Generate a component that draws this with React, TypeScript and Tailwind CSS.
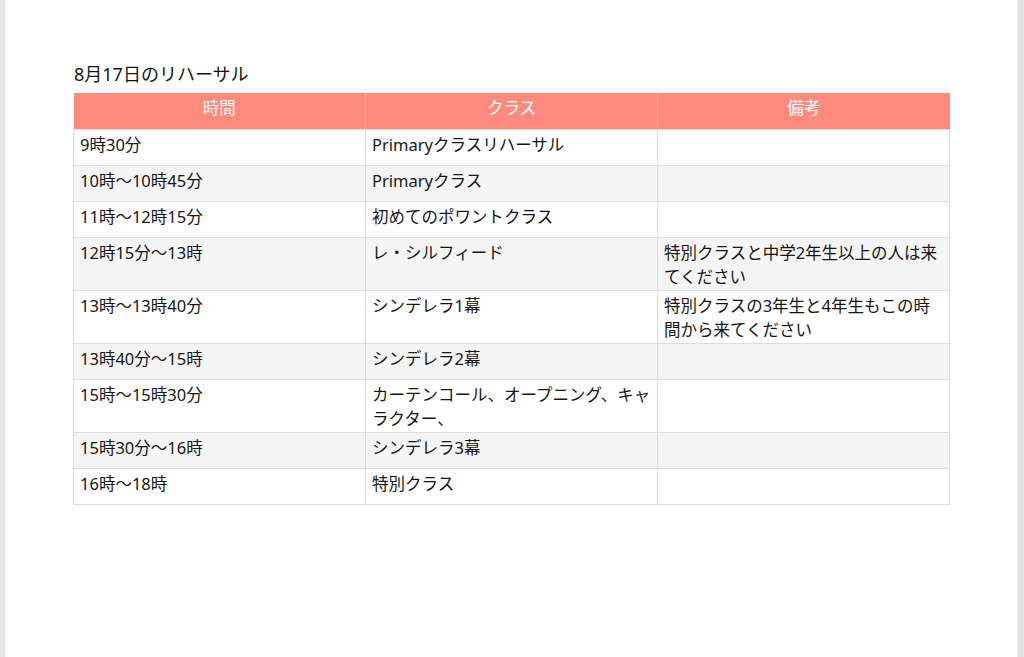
const rows: { time: string; cls: string[]; note: string[] }[] = [
  { time: "9時30分", cls: ["Primaryクラスリハーサル"], note: [] },
  { time: "10時〜10時45分", cls: ["Primaryクラス"], note: [] },
  { time: "11時〜12時15分", cls: ["初めてのポワントクラス"], note: [] },
  { time: "12時15分〜13時", cls: ["レ・シルフィード"], note: ["特別クラスと中学2年生以上の人は来", "てください"] },
  { time: "13時〜13時40分", cls: ["シンデレラ1幕"], note: ["特別クラスの3年生と4年生もこの時", "間から来てください"] },
  { time: "13時40分〜15時", cls: ["シンデレラ2幕"], note: [] },
  { time: "15時〜15時30分", cls: ["カーテンコール、オープニング、キャ", "ラクター、"], note: [] },
  { time: "15時30分〜16時", cls: ["シンデレラ3幕"], note: [] },
  { time: "16時〜18時", cls: ["特別クラス"], note: [] },
];

function Lines({ lines }: { lines: string[] }) {
  return (
    <>
      {lines.map((l) => (
        <div key={l} className="whitespace-nowrap">
          {l}
        </div>
      ))}
    </>
  );
}

export default function App() {
  const cell = "h-[36px] align-top pt-[3px] pl-[6px] pr-[2px] border border-[#dddddd] leading-[24.5px]";
  return (
    <div
      className="flex w-full h-[657px] text-[#151515]"
      style={{ fontFamily: '"Noto Sans", "Noto Sans CJK JP", sans-serif' }}
    >
      <div className="w-[6px] bg-[#e4e4e9] border-r border-[#efeff2]" />
      <main className="flex-1 bg-white pt-[62px] pl-[67px]">
        <h1 className="text-[18px] leading-[24px] mb-[7px] pl-[1px]">8月17日のリハーサル</h1>
        <table className="w-[877px] table-fixed border-collapse text-[16.5px]">
          <thead>
            <tr className="bg-[#fe8a7e] text-white border-b border-[#c49891]">
              <th className="h-[36px] align-top pt-[3px] font-normal leading-[24px] border-r border-[#ffc4bd]">時間</th>
              <th className="h-[36px] align-top pt-[3px] font-normal leading-[24px] border-r border-[#ffc4bd]">クラス</th>
              <th className="h-[36px] align-top pt-[3px] font-normal leading-[24px]">備考</th>
            </tr>
          </thead>
          <tbody>
            {rows.map((r, i) => (
              <tr key={r.time} className={i % 2 === 1 ? "bg-[#f5f5f5]" : "bg-white"}>
                <td className={cell}>{r.time}</td>
                <td className={cell}>
                  <Lines lines={r.cls} />
                </td>
                <td className={cell}>
                  <Lines lines={r.note} />
                </td>
              </tr>
            ))}
          </tbody>
        </table>
      </main>
      <div className="w-[7px] bg-[#e4e4e9] border-l border-[#efeff2]" />
    </div>
  );
}
